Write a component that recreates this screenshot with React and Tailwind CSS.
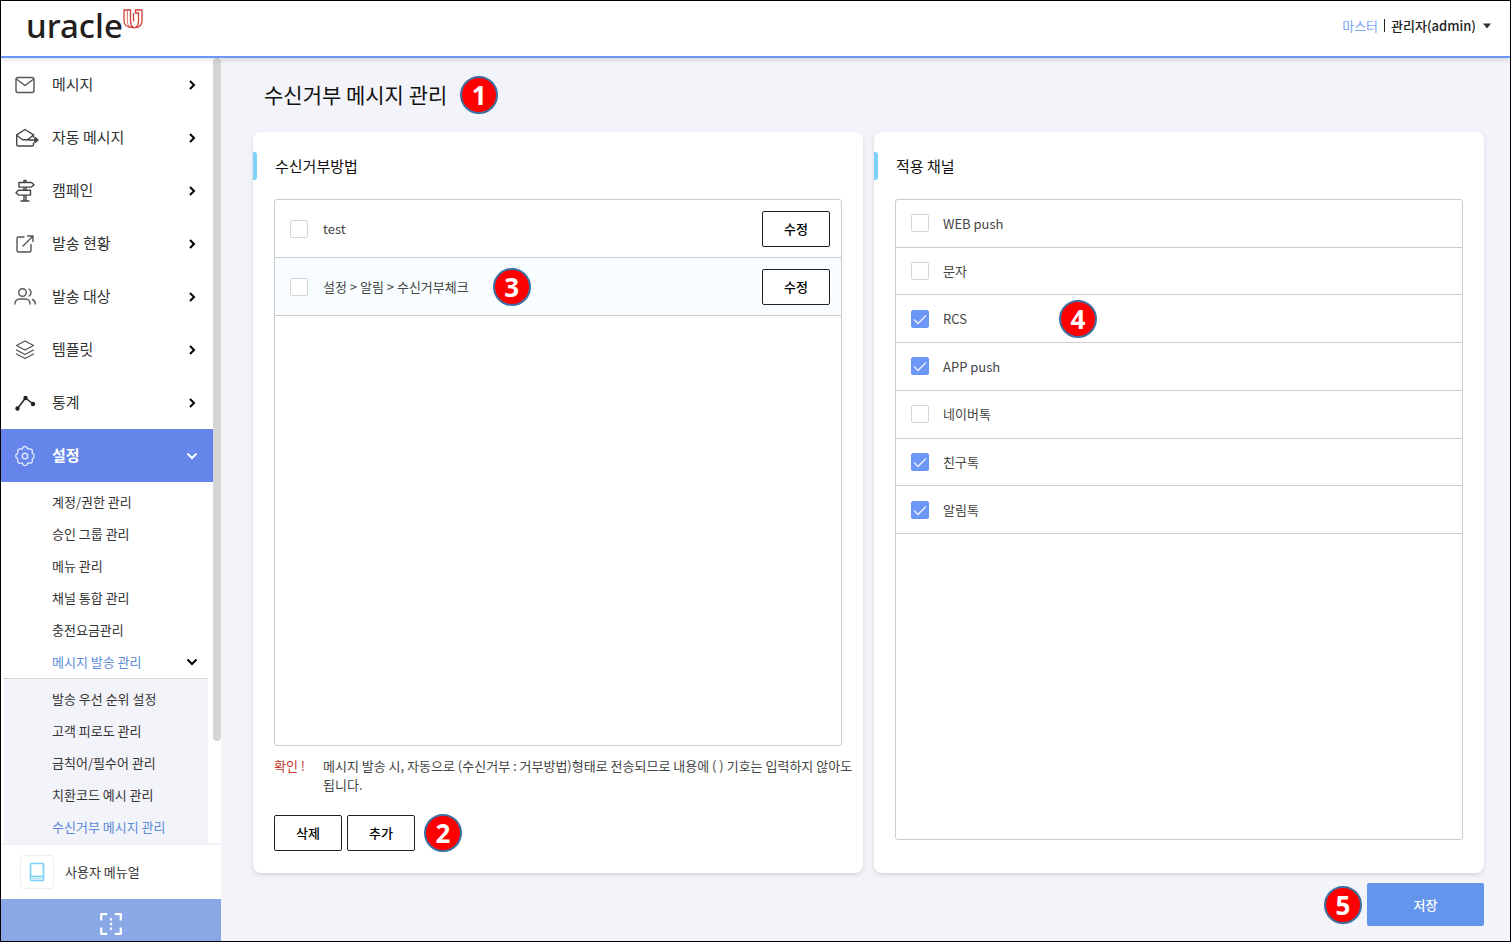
import { useState } from 'react'

const MENUS = [
  { label: '메시지', icon: MailIcon },
  { label: '자동 메시지', icon: AutoMailIcon },
  { label: '캠페인', icon: SignpostIcon },
  { label: '발송 현황', icon: ExternalIcon },
  { label: '발송 대상', icon: UsersIcon },
  { label: '템플릿', icon: LayersIcon },
  { label: '통계', icon: StatsIcon },
]

const SETTING_MENUS = ['계정/권한 관리', '승인 그룹 관리', '메뉴 관리', '채널 통합 관리', '충전요금관리']

const SEND_MENUS = [
  '발송 우선 순위 설정',
  '고객 피로도 관리',
  '금칙어/필수어 관리',
  '치환코드 예시 관리',
  '수신거부 메시지 관리',
]

const CHANNELS = ['WEB push', '문자', 'RCS', 'APP push', '네이버톡', '친구톡', '알림톡']

function Svg({ children, className }) {
  return (
    <svg
      width="24"
      height="24"
      viewBox="0 0 24 24"
      fill="none"
      stroke="currentColor"
      strokeWidth="1.4"
      strokeLinecap="round"
      strokeLinejoin="round"
      className={className}
      aria-hidden="true"
    >
      {children}
    </svg>
  )
}

function MailIcon() {
  return (
    <Svg className="text-[#555]">
      <rect x="3" y="4.5" width="18" height="15" rx="2" />
      <path d="M4 6.500 12 12.500l8-6" />
    </Svg>
  )
}

function AutoMailIcon() {
  return (
    <Svg className="overflow-visible text-[#444]">
      <path d="M20.500 11V8.800L12 3.500 3.700 8.800v9.700a1.500 1.500 0 0 0 1.500 1.500h13.800a1.500 1.500 0 0 0 1.500-1.500V17" />
      <path d="m4 9.500 5.500 4.200h5l5.500-4.200M15.500 14h9" />
      <path d="M22 11.500l3 2.500-3 2.500z" fill="currentColor" />
    </Svg>
  )
}

function SignpostIcon() {
  return (
    <Svg className="text-[#444]">
      <path d="M6 3.500h12.500l2.500 2.300-2.500 2.300H6zM17.500 11.300H5.500L3 13.700l2.500 2.400h12z" />
      <path d="M11 3v-1.500h2V3M11 8.500v2.500M13 8.500v2.500M11 16.500v5M13 16.500v5M8 22h8" />
    </Svg>
  )
}

function ExternalIcon() {
  return (
    <Svg className="text-[#555]">
      <path d="M11 5H5.500A1.500 1.500 0 0 0 4 6.500v12A1.500 1.500 0 0 0 5.500 20h11a1.500 1.500 0 0 0 1.500-1.500V12.500" />
      <path d="M10 14 20 4M14.500 4H20v5.500" />
    </Svg>
  )
}

function UsersIcon() {
  return (
    <Svg className="overflow-visible text-[#555]">
      <circle cx="9.500" cy="7.500" r="3.800" />
      <path d="M2 19v-.5A4.500 4.500 0 0 1 6.500 14h6a4.500 4.500 0 0 1 4.500 4.500v.5M16 4a4 4 0 0 1 0 7M19.500 14.500a5 5 0 0 1 2.800 4.500" />
    </Svg>
  )
}

function LayersIcon() {
  return (
    <Svg className="text-[#555]">
      <path d="m12 3 8.500 4.500L12 12 3.500 7.500z" />
      <path d="M3.500 12 12 16.500 20.500 12M3.500 16 12 20.500l8.500-4.500" />
    </Svg>
  )
}

function StatsIcon() {
  return (
    <Svg className="text-[#222]">
      <path d="m4.500 17.500 8-10.500 7.500 6" />
      <g fill="currentColor">
        <circle cx="4.500" cy="17.500" r="1.500" />
        <circle cx="12.500" cy="7" r="1.500" />
        <circle cx="20" cy="13" r="1.500" />
      </g>
    </Svg>
  )
}

function GearIcon() {
  return (
    <Svg className="text-[#dfe6fb]">
      <circle cx="12" cy="12" r="2.800" />
      <path d="M9.700 4.200a2.400 2.400 0 0 1 4.600 0 1.700 1.700 0 0 0 2 .8 2.400 2.400 0 0 1 3 3 1.700 1.700 0 0 0 .6 1.900 2.400 2.400 0 0 1 0 4.300 1.700 1.700 0 0 0-.6 1.900 2.400 2.400 0 0 1-3 3 1.700 1.700 0 0 0-2 .8 2.400 2.400 0 0 1-4.600 0 1.700 1.700 0 0 0-2-.8 2.400 2.400 0 0 1-3-3 1.700 1.700 0 0 0-.6-1.900 2.400 2.400 0 0 1 0-4.300 1.700 1.700 0 0 0 .6-1.900 2.400 2.400 0 0 1 3-3 1.700 1.700 0 0 0 2-.8z" />
    </Svg>
  )
}

function Chevron({ down }) {
  return (
    <svg width="12" height="12" viewBox="0 0 12 12" fill="none" stroke="currentColor" strokeWidth="2" aria-hidden="true">
      <path d={down ? 'M1.500 3.500 6 8l4.500-4.500' : 'M4 2l4 4-4 4'} />
    </svg>
  )
}

function Badge({ children }) {
  return (
    <span className="flex size-[38px] shrink-0 items-center justify-center rounded-full border-2 border-[#3f6f9f] bg-[#fe0000] font-['Noto_Sans','Noto_Sans_CJK_KR',sans-serif] text-[26px] leading-none font-bold text-white">
      {children}
    </span>
  )
}

function Checkbox({ id, checked, onChange }) {
  return (
    <span className="relative flex size-[18px] shrink-0">
      <input
        id={id}
        type="checkbox"
        checked={checked}
        onChange={onChange}
        className="size-[18px] appearance-none rounded-[2px] border border-[#d5d5d5] bg-white checked:border-[#6b97f6] checked:bg-[#6b97f6]"
      />
      {checked && (
        <svg viewBox="0 0 18 18" fill="none" stroke="#e8effe" strokeWidth="1.500" className="pointer-events-none absolute inset-0">
          <path d="m3 9.500 4 4 8-8" />
        </svg>
      )}
    </span>
  )
}

function OutlineButton({ children }) {
  return (
    <button
      type="button"
      className="h-9 w-[68px] rounded-[2px] border border-[#222] bg-white text-[13px] font-medium text-black"
    >
      {children}
    </button>
  )
}

function Card({ title, children }) {
  return (
    <section className="flex min-w-0 flex-1 flex-col rounded-lg bg-white shadow-[0_2px_4px_rgba(0,0,0,0.12)]">
      <div className="flex items-center pt-[20px] pb-[19px]">
        <span className="h-7 w-1 rounded-r-[3px] bg-[#7dd1f6]" />
        <h2 className="ml-[18px] text-[15px] leading-7 text-[#111]">{title}</h2>
      </div>
      {children}
    </section>
  )
}

function Header() {
  return (
    <header className="z-10 flex h-[57px] shrink-0 items-start justify-between border-b-2 border-[#6c97f8] bg-white pr-[18px] pl-[25px] shadow-[0_2px_5px_rgba(0,0,0,0.12)]">
      <a href="#" className="flex items-start text-[#231f20]">
        <span className="font-['Noto_Sans',sans-serif] text-[33px] leading-[50px] font-medium">uracle</span>
        <svg width="20" height="20" viewBox="0 0 20 20" fill="none" stroke="#d2403c" strokeWidth="1.300" className="mt-[8px]" aria-hidden="true">
          <path d="M1 1h6.500v11.500c0 2.500 1 4.500 3 6C4.500 18.500 1 16.500 1 12z" />
          <path d="M4.300 1v11.500c0 2.500 1.200 4.500 3.500 5.500" strokeWidth=".8" />
          <path d="M12.500 1H19v11c0 4-3 6.500-6.500 6.500 2-1.500 3-3.500 3-6V4h-3z" />
          <path d="M10.500 4v8.500" />
        </svg>
      </a>
      <div className="flex h-[49px] items-center text-[13px]">
        <span className="text-[#7fa6f8]">마스터</span>
        <span className="mx-[6px] h-[13px] w-px bg-[#222]" />
        <button type="button" className="flex items-center gap-[6px] font-medium text-[#222]">
          관리자(admin)
          <svg width="10" height="6" viewBox="0 0 10 6" aria-hidden="true">
            <path d="M1 .5h8L5 5.500z" fill="#333" />
          </svg>
        </button>
      </div>
    </header>
  )
}

function Sidebar() {
  return (
    <aside className="flex w-[220px] shrink-0 flex-col bg-white text-[#333]">
      <div className="flex min-h-0 flex-1">
        <nav className="min-w-0 flex-1 overflow-hidden">
          {MENUS.map(({ label, icon: Icon }) => (
            <a key={label} href="#" className="flex h-[53px] items-center pr-[15px] pl-3 text-[15px]">
              <Icon />
              <span className="ml-[15px] flex-1">{label}</span>
              <span className="text-black">
                <Chevron />
              </span>
            </a>
          ))}
          <a href="#" className="flex h-[53px] items-center bg-[#6585ea] pr-[15px] pl-3 text-[15px] font-bold text-white">
            <GearIcon />
            <span className="ml-[15px] flex-1">설정</span>
            <Chevron down />
          </a>
          <div className="pt-1 text-[13px]">
            {SETTING_MENUS.map((label) => (
              <a key={label} href="#" className="flex h-8 items-center pl-[51px]">
                {label}
              </a>
            ))}
            <a href="#" className="flex h-8 items-center justify-between pr-[15px] pl-[51px] text-[#5b8bd8]">
              메시지 발송 관리
              <span className="text-black">
                <Chevron down />
              </span>
            </a>
          </div>
          <div className="mr-[5px] ml-[3px] border-t border-dotted border-[#bbb] bg-[#f3f4f9] pt-1 pb-2 text-[13px]">
            {SEND_MENUS.map((label) => (
              <a
                key={label}
                href="#"
                className={`flex h-8 items-center pl-12 ${label === '수신거부 메시지 관리' ? 'text-[#5b8bd8]' : ''}`}
              >
                {label}
              </a>
            ))}
          </div>
        </nav>
        <div className="h-[87%] w-2 rounded-full bg-[#d5d5d5]" />
      </div>
      <a href="#" className="flex h-14 shrink-0 items-center border-t-2 border-[#f1f1f3] pl-[19px] text-[13px]">
        <span className="flex size-[34px] items-center justify-center rounded-sm border border-[#ededf0]">
          <svg width="16" height="20" viewBox="0 0 16 20" fill="none" stroke="#7dd1f6" strokeWidth="1.700" aria-hidden="true">
            <rect x="1.500" y="1.500" width="13" height="17" rx="1" />
            <path d="M1.500 14.500h13" />
            <path d="M2 15h12v3H2z" fill="#c9ecfb" stroke="none" />
          </svg>
        </span>
        <span className="ml-[11px]">사용자 메뉴얼</span>
      </a>
      <button type="button" aria-label="메뉴 접기" className="flex h-[42px] shrink-0 items-center justify-center bg-[#8aa7e6] pt-2">
        <svg width="22" height="22" viewBox="0 0 22 22" fill="none" stroke="#fff" strokeWidth="2.200" strokeLinejoin="round" aria-hidden="true">
          <path d="M1.200 7.500V1.200h6M14.800 1.200h6v6.300M20.800 14.500v6.300h-6M7.200 20.800h-6v-6.300" />
          <path d="M11 5v2.500M11 9.800v2.400M11 14.500V17" />
        </svg>
      </button>
    </aside>
  )
}

export default function App() {
  const [methods, setMethods] = useState([])
  const [channels, setChannels] = useState(['RCS', 'APP push', '친구톡', '알림톡'])

  const toggle = (list, setList, value) =>
    setList(list.includes(value) ? list.filter((v) => v !== value) : [...list, value])

  return (
    <div className="flex h-screen min-h-[900px] flex-col border border-black bg-[#f3f4f9] font-['Noto_Sans_CJK_KR',sans-serif]">
      <Header />
      <div className="flex min-h-0 flex-1">
        <Sidebar />
        <main className="flex min-w-0 flex-1 flex-col pt-[18px] pr-[26px] pb-[15px] pl-8">
          <div className="mb-[18px] flex items-center gap-[13px] pl-[11px]">
            <h1 className="text-[21px] text-[#111]">수신거부 메시지 관리</h1>
            <Badge>1</Badge>
          </div>

          <div className="flex min-h-0 flex-1 gap-[11px]">
            <Card title="수신거부방법">
              <div className="mx-[21px] flex-1 rounded-[3px] border border-[#ccc]">
                <div className="flex h-[58px] items-center border-b border-[#ccc] pr-[11px] pl-[15px]">
                  <Checkbox
                    id="method-test"
                    checked={methods.includes('test')}
                    onChange={() => toggle(methods, setMethods, 'test')}
                  />
                  <label htmlFor="method-test" className="ml-[15px] text-[13px] text-[#444]">
                    test
                  </label>
                  <span className="ml-auto flex">
                    <OutlineButton>수정</OutlineButton>
                  </span>
                </div>
                <div className="flex h-[58px] items-center border-b border-[#ccc] bg-[#f8feff] pr-[11px] pl-[15px]">
                  <Checkbox
                    id="method-alarm"
                    checked={methods.includes('alarm')}
                    onChange={() => toggle(methods, setMethods, 'alarm')}
                  />
                  <label htmlFor="method-alarm" className="mr-6 ml-[15px] text-[13px] text-[#444]">
                    설정 &gt; 알림 &gt; 수신거부체크
                  </label>
                  <Badge>3</Badge>
                  <span className="ml-auto flex">
                    <OutlineButton>수정</OutlineButton>
                  </span>
                </div>
              </div>
              <div className="mt-[10px] flex pr-2 pl-[21px] text-[13px] leading-[19px] text-[#444]">
                <strong className="w-[49px] shrink-0 font-normal text-[#c0392b]">확인 !</strong>
                <p className="break-keep">
                  메시지 발송 시, 자동으로 (수신거부 : 거부방법)형태로 전송되므로 내용에 ( ) 기호는 입력하지 않아도 됩니다.
                </p>
              </div>
              <div className="mt-5 mb-[21px] flex items-center gap-[5px] px-[21px]">
                <OutlineButton>삭제</OutlineButton>
                <OutlineButton>추가</OutlineButton>
                <span className="ml-1">
                  <Badge>2</Badge>
                </span>
              </div>
            </Card>

            <Card title="적용 채널">
              <div className="mx-[21px] mb-[33px] flex-1 rounded-[3px] border border-[#ccc]">
                <ul className="grid h-[334px] auto-rows-fr">
                  {CHANNELS.map((name) => (
                    <li key={name} className="flex items-center border-b border-[#ccc] pl-[15px]">
                      <Checkbox
                        id={`channel-${name}`}
                        checked={channels.includes(name)}
                        onChange={() => toggle(channels, setChannels, name)}
                      />
                      <label htmlFor={`channel-${name}`} className="ml-[14px] w-[116px] text-[13px] text-[#444]">
                        {name}
                      </label>
                      {name === 'RCS' && <Badge>4</Badge>}
                    </li>
                  ))}
                </ul>
              </div>
            </Card>
          </div>

          <div className="mt-[10px] flex items-center justify-end gap-[5px]">
            <Badge>5</Badge>
            <button type="button" className="h-[43px] w-[117px] rounded-[2px] bg-[#6495ed] text-[13px] font-medium text-white">
              저장
            </button>
          </div>
        </main>
      </div>
    </div>
  )
}
